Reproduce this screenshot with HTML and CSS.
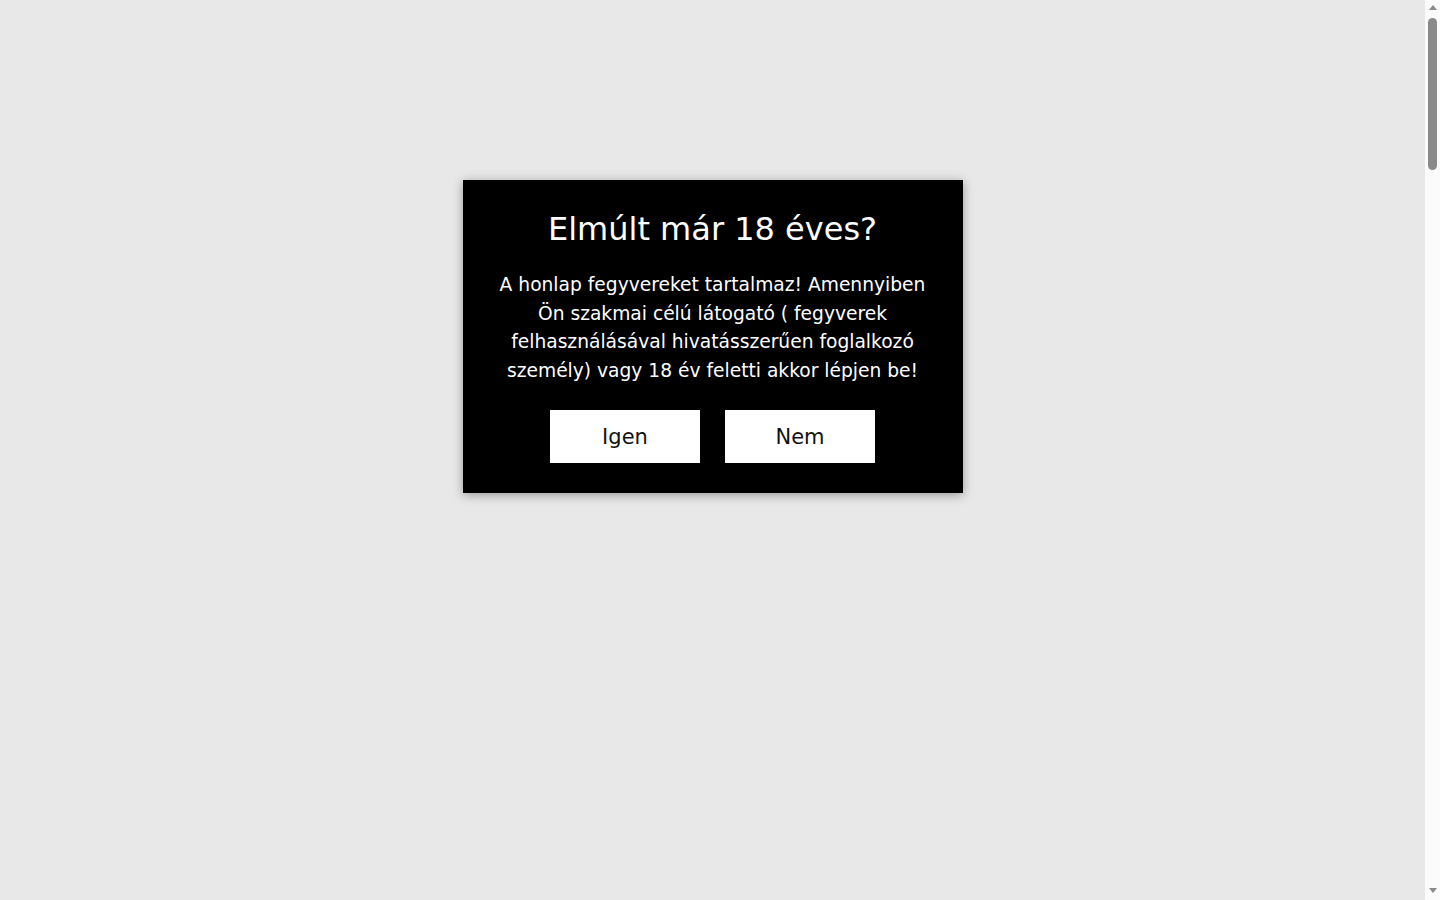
FILE: index.html
```html
<!DOCTYPE html>
<html lang="hu">
<head>
<meta charset="utf-8">
<title>Korhatár</title>
<link rel="stylesheet" href="styles.css">
</head>
<body>
<div class="page">
  <div class="age-gate">
    <h2 class="age-title">Elmúlt már 18 éves?</h2>
    <p class="age-text">A honlap fegyvereket tartalmaz! Amennyiben Ön szakmai célú látogató ( fegyverek felhasználásával hivatásszerűen foglalkozó személy) vagy 18 év feletti akkor lépjen be!</p>
    <div class="age-buttons">
      <button class="age-btn" type="button">Igen</button>
      <button class="age-btn" type="button">Nem</button>
    </div>
  </div>
</div>
<div class="scrollbar" aria-hidden="true">
  <span class="sb-arrow sb-up"></span>
  <span class="sb-thumb"></span>
  <span class="sb-arrow sb-down"></span>
</div>
</body>
</html>
```

FILE: styles.css
```css
html, body {
  margin: 0;
  padding: 0;
}
body {
  background: #e8e8e8;
  font-family: "DejaVu Sans", sans-serif;
}
.page {
  min-height: 5150px;
  margin-right: 15px;
  padding-top: 180px;
  box-sizing: border-box;
}
.age-gate {
  width: 500px;
  margin: 0 auto;
  box-sizing: border-box;
  background: #000;
  color: #fff;
  padding: 30px 30px 30px;
  text-align: center;
  box-shadow: 0 2px 10px rgba(0, 0, 0, 0.35);
}
.age-title {
  margin: 0;
  font-size: 32px;
  font-weight: normal;
  line-height: normal;
}
.age-text {
  margin: 23px 0 0;
  font-size: 18.667px;
  line-height: 28.7px;
}
.age-buttons {
  margin-top: 24px;
  display: flex;
  justify-content: center;
  gap: 25px;
}
.age-btn {
  width: 150px;
  height: 53px;
  border: 0;
  background: #fff;
  color: #111;
  font-family: "DejaVu Sans", sans-serif;
  font-size: 21px;
  padding: 2px 0 0;
  cursor: pointer;
}
.scrollbar {
  position: fixed;
  top: 0;
  right: 0;
  bottom: 0;
  width: 15px;
  background: #fbfbfb;
  display: flex;
  flex-direction: column;
  align-items: center;
}
.sb-arrow {
  width: 0;
  height: 0;
  border-left: 4px solid transparent;
  border-right: 4px solid transparent;
}
.sb-up {
  margin-top: 5px;
  border-bottom: 5px solid #8a8a8a;
}
.sb-down {
  margin-top: auto;
  margin-bottom: 7px;
  border-top: 5px solid #8a8a8a;
}
.sb-thumb {
  margin-top: 8px;
  width: 9px;
  height: 152px;
  border-radius: 5px;
  background: #8a8a8a;
}
```
